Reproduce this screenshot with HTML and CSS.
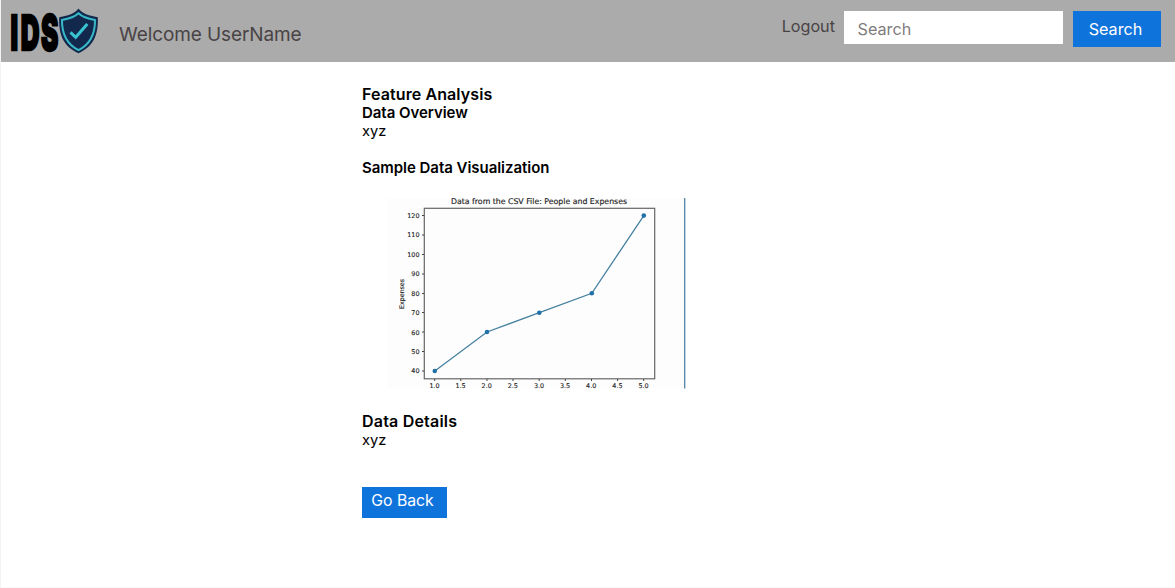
FILE: index.html
```html
<!DOCTYPE html>
<html lang="en">
<head>
<meta charset="utf-8">
<title>IDS - Feature Analysis</title>
<link rel="stylesheet" href="styles.css">
</head>
<body>
<div class="page">
  <header class="topbar">
    <svg class="logo" width="92" height="50" viewBox="8 6 92 50" role="img" aria-label="IDS">
      <text class="logo-text" transform="translate(0 49.500) scale(.52 .96)" font-size="50" x="20.200 39.800 79">IDS</text>
      <path d="M78.500 8.500C81.500 13 88 15.500 97.800 17.300C98.500 36 93 46.500 78.500 53.300C64 46.500 58.500 36 59.200 17.300C69 15.500 75.500 13 78.500 8.500Z" fill="#12284c"/>
      <path d="M78.500 13.300C82 16.800 88 18.800 95 20C95.200 35 90.200 44.200 78.500 50.200C66.800 44.200 61.800 35 62 20C69 18.800 75 16.800 78.500 13.300Z" fill="#12284c" stroke="#38b9c7" stroke-width="2"/>
      <path d="M70.500 32.300L75.700 37.300L87.300 24" fill="none" stroke="#38c4d0" stroke-width="3"/>
    </svg>
    <span class="welcome">Welcome UserName</span>
    <nav class="actions">
      <a class="logout">Logout</a>
      <input class="search-input" type="text" placeholder="Search">
      <button class="search-button">Search</button>
    </nav>
  </header>
  <main class="content">
    <h1 class="title">Feature Analysis</h1>
    <h2 class="subtitle">Data Overview</h2>
    <p class="text">xyz</p>
    <h2 class="subtitle sample">Sample Data Visualization</h2>
    <svg class="chart" width="300" height="191" viewBox="387 198 300 191">
      <rect x="387" y="198" width="297" height="190.500" fill="#fdfdfd"/>
      <path d="M684.700 198V388.500" stroke="#5187a5" stroke-width="1.300"/>
      <rect x="424.300" y="208.300" width="230.400" height="170.500" fill="none" stroke="#666" stroke-width="1.200"/>
      <path class="ticks" d="M422 215.500h2M422 235h2M422 254.500h2M422 274h2M422 293.500h2M422 312.500h2M422 332h2M422 351.500h2M422 371h2M434.700 379v2M460.800 379v2M487 379v2M513 379v2M539.200 379v2M565.300 379v2M591.500 379v2M617.600 379v2M643.700 379v2"/>
      <text class="chart-title" x="451" y="203.700" textLength="176">Data from the CSV File: People and Expenses</text>
      <g class="labels" text-anchor="end">
        <text x="419.500" y="217.900">120</text><text x="419.500" y="237.400">110</text><text x="419.500" y="256.800">100</text>
        <text x="419.500" y="276.300">90</text><text x="419.500" y="295.800">80</text><text x="419.500" y="315.100">70</text>
        <text x="419.500" y="334.600">60</text><text x="419.500" y="354">50</text><text x="419.500" y="373.400">40</text>
      </g>
      <g class="labels" text-anchor="middle">
        <text x="434.500" y="388.200">1.0</text><text x="460.600" y="388.200">1.5</text><text x="486.700" y="388.200">2.0</text>
        <text x="512.800" y="388.200">2.5</text><text x="539" y="388.200">3.0</text><text x="565" y="388.200">3.5</text>
        <text x="591.200" y="388.200">4.0</text><text x="617.400" y="388.200">4.5</text><text x="643.500" y="388.200">5.0</text>
      </g>
      <text class="axis-name" transform="translate(404 309) rotate(-90)" textLength="30">Expenses</text>
      <polyline points="434.800,371 487,332 539.300,312.700 591.800,293.300 643.800,215.600" fill="none" stroke="#4680a0" stroke-width="1.300"/>
      <g fill="#2270a8">
        <circle cx="434.800" cy="371" r="2.300"/><circle cx="487" cy="332" r="2.300"/><circle cx="539.300" cy="312.700" r="2.300"/>
        <circle cx="591.800" cy="293.300" r="2.300"/><circle cx="643.800" cy="215.600" r="2.300"/>
      </g>
    </svg>
    <h1 class="title details">Data Details</h1>
    <p class="text">xyz</p>
    <button class="back-button">Go Back</button>
  </main>
</div>
</body>
</html>
```
FILE: styles.css
```css
* { box-sizing: border-box; }
body { margin: 0; font-family: Inter, sans-serif; background: #fff; color: #000; }
.page { height: 588px; border-left: 1px solid #f3f3f3; border-bottom: 1px solid #f7f7f7; }
.topbar { display: flex; align-items: flex-start; height: 62px; padding: 6px 14px 0 7px; background: #ababab; }
.logo { display: block; flex: none; overflow: visible; }
.logo-text { font-family: Inter, sans-serif; font-weight: 900; fill: #000; stroke: #000; stroke-width: 2.4; }
.welcome { margin: 17px 0 0 19px; font-size: 19px; line-height: 24px; letter-spacing: -0.1px; color: #494345; white-space: nowrap; }
.actions { display: flex; align-items: flex-start; margin-left: auto; padding-top: 5px; }
.logout { margin: 5px 9px 0 0; font-size: 16.2px; line-height: 20px; color: #494345; }
.search-input { width: 219px; height: 33px; margin: 0 10px 0 0; padding: 3px 13.5px 0; border: 0; border-radius: 0; background: #fff; font: 16.2px/20px Inter, sans-serif; }
.search-input::placeholder { color: #807c7d; opacity: 1; }
.search-button { width: 88px; height: 36px; padding: 0 3px 0 0; border: 0; background: #0f73dc; color: #fff; font: 16.2px/20px Inter, sans-serif; }
.content { display: flex; flex-direction: column; align-items: flex-start; padding: 23px 0 0 361px; }
.title { margin: 0; font-size: 16px; line-height: 19px; font-weight: 600; letter-spacing: 0.1px; }
.details { letter-spacing: 0.2px; }
.subtitle { margin: 0; font-size: 15px; line-height: 18px; font-weight: 600; letter-spacing: -0.04px; }
.text { margin: 0; font-size: 14.700px; line-height: 18px; }
.sample { margin-top: 19px; }
.chart { display: block; margin: 21px 0 23px 25px; font-family: "DejaVu Sans", sans-serif; fill: #222; }
.chart-title { font-size: 7.8px; stroke: #222; stroke-width: 0.150; }
.labels, .axis-name { font-size: 6.4px; stroke: #222; stroke-width: 0.120; }
.ticks { fill: none; stroke: #444; stroke-width: 1; }
.text + .back-button { margin-top: 38px; }
.details + .text { line-height: 19px; margin-bottom: -1px; }
.back-button { width: 85px; height: 31px; padding: 0 4px 5px 0; border: 0; background: #0f73dc; color: #fff; font: 15.800px/19px Inter, sans-serif; }
```
